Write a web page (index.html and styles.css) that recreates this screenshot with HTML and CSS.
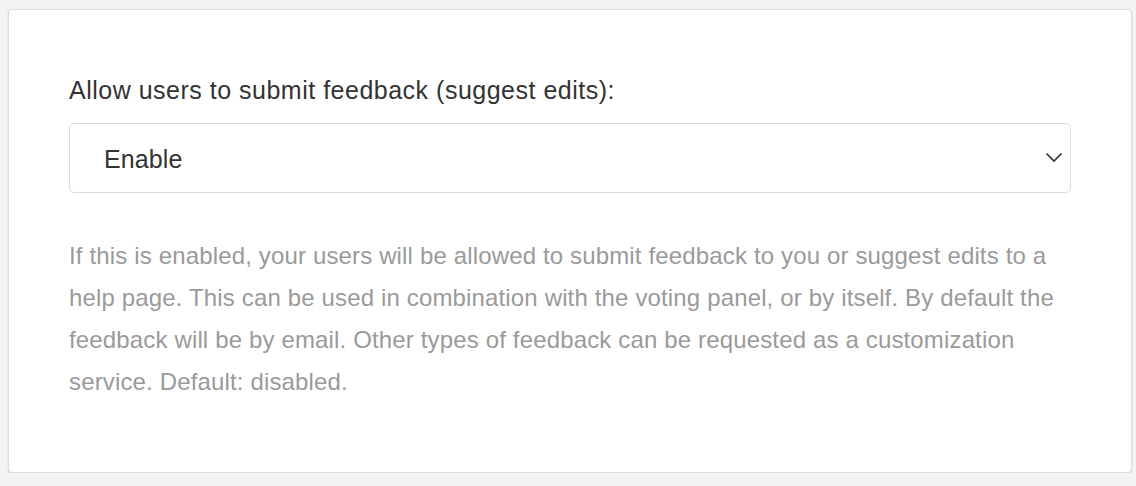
FILE: index.html
```html
<!DOCTYPE html>
<html>
<head>
<meta charset="utf-8">
<link rel="stylesheet" href="styles.css">
</head>
<body>
<div class="card">
  <label class="label" for="fb">Allow users to submit feedback (suggest edits):</label>
  <div class="select">
    <span class="value">Enable</span>
    <svg class="chev" width="18" height="11" viewBox="0 0 18 11"><path d="M1.5 1.5 L9 9 L16.5 1.5" fill="none" stroke="#333" stroke-width="1.7"/></svg>
  </div>
  <p class="help">If this is enabled, your users will be allowed to submit feedback to you or suggest edits to a help page. This can be used in combination with the voting panel, or by itself. By default the feedback will be by email. Other types of feedback can be requested as a customization service. Default: disabled.</p>
</div>
</body>
</html>
```
FILE: styles.css
```css
html, body { margin: 0; padding: 0; }
body {
  background: #f3f3f3;
  padding: 9px 4px 0 8px;
  font-family: "Liberation Sans", Arial, Helvetica, sans-serif;
}
.card {
  background: #fff;
  border: 1px solid #dcdcdc;
  border-radius: 4px;
  box-shadow: 0 1px 2px rgba(0,0,0,0.12);
  height: 464px;
  box-sizing: border-box;
  padding: 65px 60px 0 60px;
}
.label {
  display: block;
  font-size: 25px;
  letter-spacing: 0.5px;
  color: #333;
  line-height: 30px;
}
.select {
  margin-top: 18px;
  height: 70px;
  box-sizing: border-box;
  border: 1px solid #dcdcdc;
  border-radius: 5px;
  display: flex;
  align-items: center;
  justify-content: space-between;
  padding: 2px 7px 0 34px;
}
.value { font-size: 25px; letter-spacing: 0.1px; color: #333; }
.chev { display: block; margin-top: -3px; }
.help {
  margin: 42px 0 0 0;
  font-size: 24px;
  letter-spacing: 0.15px;
  line-height: 42px;
  color: #9a9a9a;
}
```
